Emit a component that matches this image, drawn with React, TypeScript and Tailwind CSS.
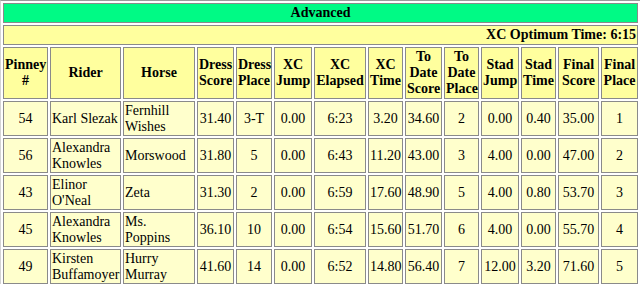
const widths = [45, 71, 72, 37, 36, 38, 52, 35, 37, 35, 38, 35, 41, 37]

const headers = [
    ['Pinney', '#'],
    ['Rider'],
    ['Horse'],
    ['Dress', 'Score'],
    ['Dress', 'Place'],
    ['XC', 'Jump'],
    ['XC', 'Elapsed'],
    ['XC', 'Time'],
    ['To', 'Date', 'Score'],
    ['To', 'Date', 'Place'],
    ['Stad', 'Jump'],
    ['Stad', 'Time'],
    ['Final', 'Score'],
    ['Final', 'Place'],
]

const rows = [
    ['54', 'Karl Slezak', 'Fernhill Wishes', '31.40', '3-T', '0.00', '6:23', '3.20', '34.60', '2', '0.00', '0.40', '35.00', '1'],
    ['56', 'Alexandra Knowles', 'Morswood', '31.80', '5', '0.00', '6:43', '11.20', '43.00', '3', '4.00', '0.00', '47.00', '2'],
    ['43', 'Elinor O\'Neal', 'Zeta', '31.30', '2', '0.00', '6:59', '17.60', '48.90', '5', '4.00', '0.80', '53.70', '3'],
    ['45', 'Alexandra Knowles', 'Ms. Poppins', '36.10', '10', '0.00', '6:54', '15.60', '51.70', '6', '4.00', '0.00', '55.70', '4'],
    ['49', 'Kirsten Buffamoyer', 'Hurry Murray', '41.60', '14', '0.00', '6:52', '14.80', '56.40', '7', '12.00', '3.20', '71.60', '5'],
    // next row only shows its top edge in the crop
    Array(14).fill(''),
]

const cell = 'border border-[#8a8a8a] p-[1px] align-middle'

export default function App() {
    return (
        <div className="w-[640px] h-[284px] overflow-hidden bg-white font-['Liberation_Serif',serif] text-[14px] text-black">
            <table className="w-[640px] table-fixed border-separate border-spacing-[2px] border-t border-l border-r border-t-[#9a9a9a] border-l-[#d4d4d4] border-r-[#8a8a8a]">
                <colgroup>
                    {widths.map((w, i) => (
                        <col key={i} style={{ width: w }} />
                    ))}
                </colgroup>
                <tbody>
                    <tr>
                        <td colSpan={14} className={`${cell} bg-[#00fa85] text-center font-bold leading-[16px]`}>
                            Advanced
                        </td>
                    </tr>
                    <tr>
                        <td colSpan={14} className={`${cell} bg-[#ffff9e] text-right font-bold leading-[16px]`}>
                            XC Optimum Time: 6:15
                        </td>
                    </tr>
                    <tr>
                        {headers.map((h, i) => (
                            <th key={i} className={`${cell} bg-[#ffff9e] text-center font-bold leading-[16px]`}>
                                {h.map((line, j) => (
                                    <div key={j}>{line}</div>
                                ))}
                            </th>
                        ))}
                    </tr>
                    {rows.map((r, i) => (
                        <tr key={i}>
                            {r.map((v, j) => (
                                <td
                                    key={j}
                                    className={`${cell} h-[35px] bg-[#ffffcc] leading-[15.5px] ${j === 1 || j === 2 ? 'text-left' : 'text-center'}`}
                                >
                                    {v}
                                </td>
                            ))}
                        </tr>
                    ))}
                </tbody>
            </table>
        </div>
    )
}
